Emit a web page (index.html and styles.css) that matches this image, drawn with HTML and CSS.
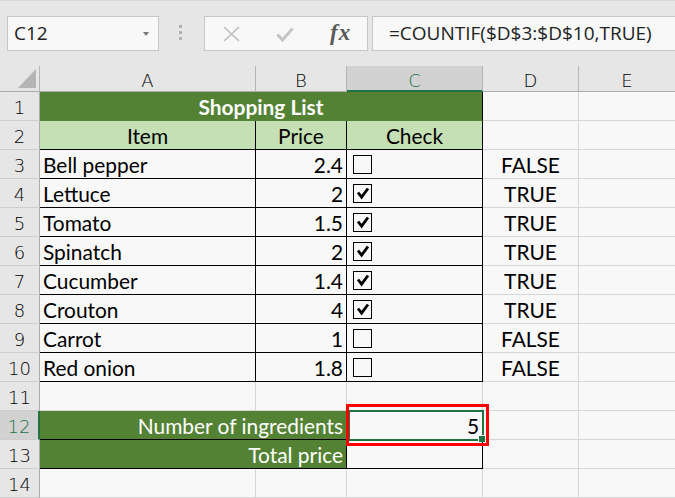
FILE: index.html
```html
<!DOCTYPE html>
<html>
<head>
<meta charset="utf-8">
<link rel="stylesheet" href="styles.css">
</head>
<body>
<div class="toolbar">
  <div class="namebox"><span class="nb-text">C12</span><span class="nb-arrow"></span></div>
  <div class="grip"><i></i><i></i><i></i></div>
  <div class="fxbox">
    <svg class="ic-x" width="17" height="16" viewBox="0 0 17 16"><path d="M1 1 L16 15 M16 1 L1 15" stroke="#bdbdbd" stroke-width="1.7" fill="none"/></svg>
    <svg class="ic-ok" width="18" height="15" viewBox="0 0 18 15"><path d="M1.5 7.5 L6.5 13 L16.5 1.5" stroke="#c6c6c6" stroke-width="3" fill="none"/></svg>
    <span class="fx">fx</span>
  </div>
  <div class="formula">=COUNTIF($D$3:$D$10,TRUE)</div>
</div>
<div class="sheet">
  <div class="c h corner"><svg width="39" height="25" viewBox="0 0 39 25"><polygon points="36,3 36,22 18,22" fill="#b4b4b4"/></svg></div>
  <div class="c h">A</div>
  <div class="c h">B</div>
  <div class="c h hsel">C</div>
  <div class="c h">D</div>
  <div class="c h last">E</div>

  <div class="c r">1</div>
  <div class="c t">Shopping List</div>
  <div class="c"></div>
  <div class="c last"></div>

  <div class="c r">2</div>
  <div class="c s">Item</div>
  <div class="c s">Price</div>
  <div class="c s">Check</div>
  <div class="c"></div>
  <div class="c last"></div>

  <div class="c r">3</div>
  <div class="c k">Bell pepper</div>
  <div class="c k n">2.4</div>
  <div class="c k cbc"><svg class="cb" width="19" height="19" viewBox="0 0 19 19"><rect x="0.5" y="0.5" width="18" height="18" fill="none" stroke="#000"/></svg></div>
  <div class="c d">FALSE</div>
  <div class="c last"></div>

  <div class="c r">4</div>
  <div class="c k">Lettuce</div>
  <div class="c k n">2</div>
  <div class="c k cbc"><svg class="cb" width="19" height="19" viewBox="0 0 19 19"><rect x="0.5" y="0.5" width="18" height="18" fill="none" stroke="#000"/><path d="M5 8.5 L8.6 13.2 L15 4.5" fill="none" stroke="#000" stroke-width="2.8"/></svg></div>
  <div class="c d">TRUE</div>
  <div class="c last"></div>

  <div class="c r">5</div>
  <div class="c k">Tomato</div>
  <div class="c k n">1.5</div>
  <div class="c k cbc"><svg class="cb" width="19" height="19" viewBox="0 0 19 19"><rect x="0.5" y="0.5" width="18" height="18" fill="none" stroke="#000"/><path d="M5 8.5 L8.6 13.2 L15 4.5" fill="none" stroke="#000" stroke-width="2.8"/></svg></div>
  <div class="c d">TRUE</div>
  <div class="c last"></div>

  <div class="c r">6</div>
  <div class="c k">Spinatch</div>
  <div class="c k n">2</div>
  <div class="c k cbc"><svg class="cb" width="19" height="19" viewBox="0 0 19 19"><rect x="0.5" y="0.5" width="18" height="18" fill="none" stroke="#000"/><path d="M5 8.5 L8.6 13.2 L15 4.5" fill="none" stroke="#000" stroke-width="2.8"/></svg></div>
  <div class="c d">TRUE</div>
  <div class="c last"></div>

  <div class="c r">7</div>
  <div class="c k">Cucumber</div>
  <div class="c k n">1.4</div>
  <div class="c k cbc"><svg class="cb" width="19" height="19" viewBox="0 0 19 19"><rect x="0.5" y="0.5" width="18" height="18" fill="none" stroke="#000"/><path d="M5 8.5 L8.6 13.2 L15 4.5" fill="none" stroke="#000" stroke-width="2.8"/></svg></div>
  <div class="c d">TRUE</div>
  <div class="c last"></div>

  <div class="c r">8</div>
  <div class="c k">Crouton</div>
  <div class="c k n">4</div>
  <div class="c k cbc"><svg class="cb" width="19" height="19" viewBox="0 0 19 19"><rect x="0.5" y="0.5" width="18" height="18" fill="none" stroke="#000"/><path d="M5 8.5 L8.6 13.2 L15 4.5" fill="none" stroke="#000" stroke-width="2.8"/></svg></div>
  <div class="c d">TRUE</div>
  <div class="c last"></div>

  <div class="c r">9</div>
  <div class="c k">Carrot</div>
  <div class="c k n">1</div>
  <div class="c k cbc"><svg class="cb" width="19" height="19" viewBox="0 0 19 19"><rect x="0.5" y="0.5" width="18" height="18" fill="none" stroke="#000"/></svg></div>
  <div class="c d">FALSE</div>
  <div class="c last"></div>

  <div class="c r">10</div>
  <div class="c k">Red onion</div>
  <div class="c k n">1.8</div>
  <div class="c k cbc"><svg class="cb" width="19" height="19" viewBox="0 0 19 19"><rect x="0.5" y="0.5" width="18" height="18" fill="none" stroke="#000"/></svg></div>
  <div class="c d">FALSE</div>
  <div class="c last"></div>

  <div class="c r">11</div>
  <div class="c"></div>
  <div class="c"></div>
  <div class="c"></div>
  <div class="c"></div>
  <div class="c last"></div>

  <div class="c r rsel">12</div>
  <div class="c g">Number of ingredients</div>
  <div class="c k n active">5<span class="sel"><span class="handle"></span></span><span class="mark"></span></div>
  <div class="c"></div>
  <div class="c last"></div>

  <div class="c r">13</div>
  <div class="c g">Total price</div>
  <div class="c k"></div>
  <div class="c"></div>
  <div class="c last"></div>

  <div class="c r">14</div>
  <div class="c"></div>
  <div class="c"></div>
  <div class="c"></div>
  <div class="c"></div>
  <div class="c last"></div>
</div>
</body>
</html>
```

FILE: styles.css
```css
html, body {
  margin: 0;
  padding: 0;
}
body {
  width: 675px;
  height: 498px;
  overflow: hidden;
  background: #f8f8f8;
}

/* ---------- formula toolbar ---------- */
.toolbar {
  box-sizing: border-box;
  height: 66px;
  background: #e6e6e6;
  border-top: 1px solid #d8d8d8;
  padding-top: 15px;
  display: flex;
  align-items: flex-start;
  font-family: "Open Sans", "Noto Sans", sans-serif;
  color: #222;
}
.namebox {
  box-sizing: border-box;
  width: 152px;
  height: 35px;
  margin-left: 7px;
  background: #f8f8f8;
  border: 1px solid #c6c6c6;
  display: flex;
  align-items: center;
  padding-left: 6px;
  font-size: 19px;
}
.nb-text {
  flex: 1;
  line-height: 33px;
}
.nb-arrow {
  width: 0;
  height: 0;
  border-left: 3.5px solid transparent;
  border-right: 3.5px solid transparent;
  border-top: 4px solid #777;
  margin-right: 9px;
}
.grip {
  margin-left: 20px;
  margin-top: 9px;
  display: flex;
  flex-direction: column;
  gap: 3px;
}
.grip i {
  display: block;
  width: 3px;
  height: 3px;
  background: #b0b0b0;
}
.fxbox {
  box-sizing: border-box;
  width: 164px;
  height: 35px;
  margin-left: 22px;
  background: #f8f8f8;
  border: 1px solid #c6c6c6;
  display: flex;
  align-items: flex-start;
}
.ic-x {
  margin-left: 18px;
  margin-top: 9px;
}
.ic-ok {
  margin-left: 36px;
  margin-top: 10px;
}
.fx {
  margin-left: 36px;
  margin-top: 1px;
  font-family: "Liberation Serif", serif;
  font-style: italic;
  font-weight: 700;
  font-size: 23px;
  letter-spacing: 1px;
  line-height: 30px;
  color: #5a5a5a;
}
.formula {
  box-sizing: border-box;
  flex: 1;
  height: 35px;
  margin-left: 4px;
  margin-right: -2px;
  background: #f8f8f8;
  border: 1px solid #c6c6c6;
  padding-left: 16px;
  font-size: 19px;
  line-height: 33px;
  white-space: nowrap;
  overflow: hidden;
}

/* ---------- sheet grid ---------- */
.sheet {
  display: grid;
  grid-template-columns: 40px 216px 91px 136px 96px 96px;
  grid-template-rows: 26px repeat(14, 29px);
}
.c {
  box-sizing: border-box;
  border-right: 1px solid #d6d6d6;
  border-bottom: 1px solid #d6d6d6;
  font-family: "Lato", "Liberation Sans", sans-serif;
  font-size: 20.9px;
  line-height: 28px;
  padding: 1px 3px 0;
  white-space: nowrap;
  overflow: hidden;
  color: #000;
}
.c.last {
  border-right: none;
}
.h {
  background: #e6e6e6;
  border-right-color: #b4b4b4;
  border-bottom-color: #ababab;
  font-family: "DejaVu Sans", sans-serif;
  font-weight: 200;
  font-size: 18px;
  line-height: 25px;
  padding: 2px 0 0;
  text-align: center;
  color: #000;
}
.corner {
  padding: 0;
  line-height: 0;
}
.corner svg {
  display: block;
}
.hsel {
  background: #d2d2d2;
  color: #217346;
  border-bottom: 2px solid #217346;
}
.r {
  background: #e6e6e6;
  border-right-color: #ababab;
  border-bottom-color: #cdcdcd;
  font-family: "DejaVu Sans", sans-serif;
  font-weight: 200;
  font-size: 18px;
  line-height: 25px;
  padding: 3px 0 0;
  text-align: center;
  color: #000;
}
.rsel {
  background: #d2d2d2;
  color: #217346;
  border-right: 2px solid #217346;
}

/* title row */
.t {
  grid-column: span 3;
  background: #548235;
  color: #fff;
  font-weight: 700;
  text-align: center;
  border-right-color: #000;
  border-bottom-color: #548235;
}
/* header row */
.s {
  background: #c5e0b4;
  text-align: center;
  border-right-color: #000;
  border-bottom-color: #000;
}
/* bordered data cells */
.k {
  border-right-color: #000;
  border-bottom-color: #000;
}
.n {
  text-align: right;
}
.d {
  text-align: center;
}
.cbc {
  display: flex;
  align-items: center;
  padding-left: 6px;
  padding-top: 1px;
}
.cb {
  display: block;
}
/* total rows */
.g {
  grid-column: span 2;
  background: #548235;
  color: #fff;
  text-align: right;
  border-right-color: #000;
  border-bottom-color: #000;
}

/* active cell */
.active {
  position: relative;
  overflow: visible;
}
.sel {
  position: absolute;
  left: 0;
  top: -1px;
  width: 137px;
  height: 31px;
  box-sizing: border-box;
  border: 2px solid #217346;
  border-left-width: 3px;
}
.handle {
  position: absolute;
  right: -3px;
  bottom: -3px;
  width: 6px;
  height: 6px;
  background: #217346;
  border: 1px solid #f8f8f8;
  border-right: none;
  border-bottom: none;
}
.mark {
  position: absolute;
  left: -1px;
  top: -7px;
  width: 143px;
  height: 42px;
  box-sizing: border-box;
  border: 3px solid #ff0000;
}
```
